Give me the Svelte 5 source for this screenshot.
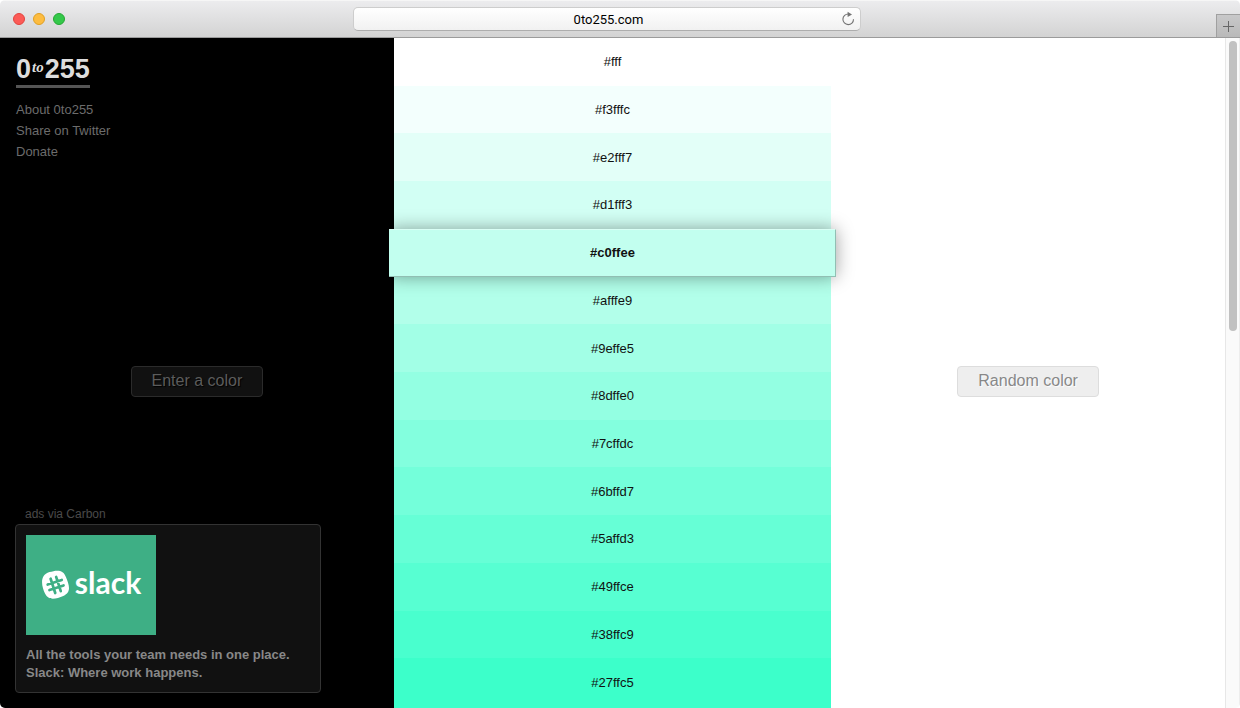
<script>
  // Each shade is listed with its label and the slightly softer tone it is painted in.
  const shades = [
    { name: 'fff', paint: '#ffffff' },
    { name: 'f3fffc', paint: '#f3fffd' },
    { name: 'e2fff7', paint: '#e3fff8' },
    { name: 'd1fff3', paint: '#d2fff4' },
    { name: 'c0ffee', paint: '#c2ffef' },
    { name: 'afffe9', paint: '#b2ffea' },
    { name: '9effe5', paint: '#a2ffe6' },
    { name: '8dffe0', paint: '#93ffe2' },
    { name: '7cffdc', paint: '#83ffde' },
    { name: '6bffd7', paint: '#74ffda' },
    { name: '5affd3', paint: '#66ffd6' },
    { name: '49ffce', paint: '#57ffd2' },
    { name: '38ffc9', paint: '#49ffce' },
    { name: '27ffc5', paint: '#3cffca' }
  ];
  let current = $state('c0ffee');
  let address = $state('0to255.com');

  function randomShade() {
    current = shades[Math.floor(Math.random() * shades.length)].name;
  }
</script>

<div class="window">
  <header class="toolbar">
    <div class="lights">
      <button class="light close" aria-label="Close"></button>
      <button class="light minimise" aria-label="Minimise"></button>
      <button class="light zoom" aria-label="Zoom"></button>
    </div>
    <form class="address" onsubmit={(e) => e.preventDefault()}>
      <input aria-label="Address" bind:value={address} />
      <button class="reload" aria-label="Reload">
        <svg width="14" height="14" viewBox="0 0 14 14">
          <path d="M7.5 2A5.3 5.3 0 1 0 12.5 7.2" fill="none" stroke="#737373" stroke-width="1.1" />
          <path d="M6.6 -0.2L11 2.4L6.6 5Z" fill="#737373" />
        </svg>
      </button>
    </form>
    <button class="new-tab" aria-label="New tab">
      <svg width="11" height="11" viewBox="0 0 11 11"><path d="M0 5.5H11M5.5 0V11" stroke="#666" /></svg>
    </button>
  </header>

  <div class="viewport">
    <main class="page">
      <section class="side dark">
        <div class="top">
          <h1><a href="#home"><span>0</span><em>to</em><span>255</span></a></h1>
          <nav>
            <a href="#about">About 0to255</a>
            <a href="#share">Share on Twitter</a>
            <a href="#donate">Donate</a>
          </nav>
        </div>
        <button class="action">Enter a color</button>
        <aside class="ads">
          <a class="via" href="#carbon">ads via Carbon</a>
          <a class="ad" href="#slack">
            <span class="banner">
              <svg width="30" height="30" viewBox="0 0 30 30" aria-hidden="true">
                <path
                  d="M8.5 2.1C15.5-.1 22.5-.8 25 7.3C28 14.5 30.9 22.3 22.3 25.9C15.5 28.6 8 31.6 4 23.6C.6 16.3-1.9 5.3 8.5 2.1Z"
                  fill="#fff"
                />
                <g stroke="#3eaf85" stroke-width="2.7" stroke-linecap="round" transform="rotate(-18 14.6 15)">
                  <path d="M11.8 7.5V22.5M17.6 7.5V22.5M7.2 12.1H22M7.2 17.9H22" />
                </g>
              </svg>
              <strong>slack</strong>
            </span>
            <span class="copy">All the tools your team needs in one place. Slack: Where work happens.</span>
          </a>
        </aside>
      </section>

      <ul class="shades">
        {#each shades as shade}
          <li class:current={shade.name === current} style:background-color={shade.paint}>
            <button onclick={() => (current = shade.name)}>#{shade.name}</button>
          </li>
        {/each}
      </ul>

      <section class="side light-side">
        <button class="action" onclick={randomShade}>Random color</button>
      </section>
    </main>
    <div class="scrollbar"><div class="thumb"></div></div>
  </div>
</div>

<style>
  :global(body) {
    margin: 0;
    background: #fff;
  }
  .window {
    display: flex;
    flex-direction: column;
    height: 100vh;
    overflow: hidden;
    border-radius: 5px;
    font-family: "Liberation Sans", Arial, sans-serif;
    font-size: 13px;
  }
  button {
    margin: 0;
    padding: 0;
    border: 0;
    background: none;
    font: inherit;
    color: inherit;
  }
  a {
    color: inherit;
    text-decoration: none;
  }

  .toolbar {
    display: grid;
    grid-template-columns: 1fr minmax(200px, 508px) 1fr;
    align-items: center;
    box-sizing: border-box;
    height: 38px;
    flex: none;
    border-top: 1px solid #f6f6f6;
    border-bottom: 1px solid #9b9b9b;
    background: linear-gradient(#ececee, #d3d3d3);
  }
  .lights {
    display: flex;
    gap: 8px;
    padding-left: 13px;
  }
  .light {
    box-sizing: border-box;
    width: 12px;
    height: 12px;
    border: 1px solid;
    border-radius: 50%;
  }
  .close { background: #fc5b57; border-color: #e2443f; }
  .minimise { background: #fdbc40; border-color: #dfa023; }
  .zoom { background: #34c84a; border-color: #24a732; }
  .address {
    display: flex;
    align-items: center;
    box-sizing: border-box;
    height: 24px;
    margin-left: -13px;
    margin-right: 13px;
    width: 100%;
    border: 1px solid #cdcdcd;
    border-bottom-color: #adadad;
    border-radius: 5px;
    background: linear-gradient(#fff, #f1f1f1);
  }
  .address input {
    flex: 1;
    min-width: 0;
    padding: 0 0 0 22px;
    border: 0;
    background: none;
    color: #000;
    font: 13px Roboto, sans-serif;
    text-align: center;
    outline: 0;
  }
  .reload {
    display: flex;
    padding-right: 5px;
  }
  .reload svg {
    overflow: visible;
  }
  .new-tab {
    display: grid;
    place-items: center;
    justify-self: end;
    align-self: end;
    width: 24px;
    height: 23px;
    border-left: 1px solid #a0a0a0;
    border-top: 1px solid #a0a0a0;
    background: linear-gradient(#c8c8c9, #b9b9b9);
  }

  .viewport {
    display: flex;
    flex: 1;
    min-height: 0;
    background: #fff;
  }
  .page {
    display: grid;
    grid-template-columns: 9fr 10fr 9fr;
    flex: 1;
    min-width: 0;
  }
  .side {
    display: grid;
    grid-template-rows: 1fr auto 1fr;
    justify-items: center;
    min-width: 0;
  }
  .side .action {
    grid-row: 2;
    margin-top: 16px;
    height: 31px;
    padding: 0 20px;
    border: 1px solid;
    border-radius: 4px;
    font-size: 16px;
  }
  .dark {
    background: #000;
  }
  .dark .action {
    border-color: #2b2b2b;
    background: #111;
    color: #5c5c5c;
    text-shadow: 1px 1px 1px #000;
  }
  .light-side .action {
    border-color: #ddd;
    background: #eee;
    color: #888;
    text-shadow: 1px 1px 1px #fff;
  }

  .top {
    justify-self: start;
    padding: 16px;
  }
  h1 {
    margin: 0 0 11px;
    font-size: 27px;
    line-height: 31px;
  }
  h1 a {
    display: inline-flex;
    border-bottom: 3px solid #555;
    color: #ddd;
  }
  h1 em {
    padding: 0 1px;
    font: italic 700 15px/27px "Liberation Serif", serif;
  }
  nav {
    display: flex;
    flex-direction: column;
    color: #6c6c6c;
    line-height: 21px;
  }

  .ads {
    display: flex;
    flex-direction: column;
    align-self: end;
    justify-self: start;
    width: 306px;
    max-width: calc(100% - 30px);
    margin: 0 15px 15px;
  }
  .via {
    padding: 0 10px;
    color: #4a4a4a;
    font-size: 12px;
    line-height: 20px;
  }
  .ad {
    display: flex;
    flex-direction: column;
    gap: 11px;
    padding: 10px;
    border: 1px solid #333;
    border-radius: 4px;
    background: #111;
  }
  .ads, .ad { box-sizing: border-box; }
  .banner {
    display: flex;
    align-items: center;
    justify-content: center;
    gap: 4px;
    width: 130px;
    height: 100px;
    background: #3eaf85;
    color: #fff;
  }
  .banner strong {
    padding-bottom: 6px;
    font: 700 30px/36px Lato, sans-serif;
  }
  .copy {
    color: #888;
    font-weight: 700;
    line-height: 18px;
  }

  .shades {
    display: grid;
    grid-template-rows: repeat(14, 1fr);
    margin: 0;
    padding: 0 0 2px;
    list-style: none;
    background: #3cffca;
  }
  .shades li {
    display: grid;
    min-height: 0;
  }
  .shades button {
    color: #111;
  }
  .shades .current {
    position: relative;
    margin: 0 -5px;
    box-shadow: 0 0 18px rgba(0, 0, 0, 0.38), inset 0 1px rgba(255, 255, 255, 0.4),
      inset -1px -1px rgba(0, 0, 0, 0.25);
  }
  .shades .current button {
    font-weight: 700;
  }

  .scrollbar {
    box-sizing: border-box;
    width: 15px;
    padding: 3px 2px 3px 3px;
    border-left: 1px solid #e7e7e7;
    border-right: 1px solid #ededed;
    background: #fafafa;
  }
  .thumb {
    width: 8px;
    height: 43.7%;
    border-radius: 4px;
    background: #c1c1c1;
  }
</style>
